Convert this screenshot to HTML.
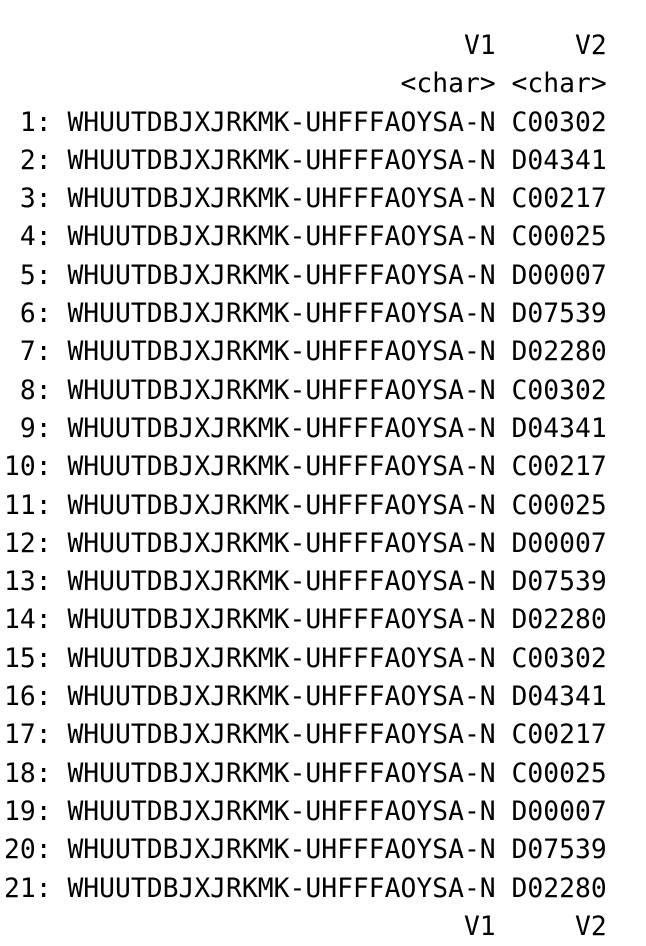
<!DOCTYPE html>
<html><head><style>
html,body{margin:0;padding:0;background:#fff;width:646px;height:942px;overflow:hidden}
pre{position:absolute;left:4px;top:27px;margin:0;font-family:"DejaVu Sans Mono","Liberation Mono",monospace;font-size:26.35px;line-height:38.3px;color:#000}
</style></head><body>
<pre>                             V1     V2
                         &lt;char&gt; &lt;char&gt;
 1: WHUUTDBJXJRKMK-UHFFFAOYSA-N C00302
 2: WHUUTDBJXJRKMK-UHFFFAOYSA-N D04341
 3: WHUUTDBJXJRKMK-UHFFFAOYSA-N C00217
 4: WHUUTDBJXJRKMK-UHFFFAOYSA-N C00025
 5: WHUUTDBJXJRKMK-UHFFFAOYSA-N D00007
 6: WHUUTDBJXJRKMK-UHFFFAOYSA-N D07539
 7: WHUUTDBJXJRKMK-UHFFFAOYSA-N D02280
 8: WHUUTDBJXJRKMK-UHFFFAOYSA-N C00302
 9: WHUUTDBJXJRKMK-UHFFFAOYSA-N D04341
10: WHUUTDBJXJRKMK-UHFFFAOYSA-N C00217
11: WHUUTDBJXJRKMK-UHFFFAOYSA-N C00025
12: WHUUTDBJXJRKMK-UHFFFAOYSA-N D00007
13: WHUUTDBJXJRKMK-UHFFFAOYSA-N D07539
14: WHUUTDBJXJRKMK-UHFFFAOYSA-N D02280
15: WHUUTDBJXJRKMK-UHFFFAOYSA-N C00302
16: WHUUTDBJXJRKMK-UHFFFAOYSA-N D04341
17: WHUUTDBJXJRKMK-UHFFFAOYSA-N C00217
18: WHUUTDBJXJRKMK-UHFFFAOYSA-N C00025
19: WHUUTDBJXJRKMK-UHFFFAOYSA-N D00007
20: WHUUTDBJXJRKMK-UHFFFAOYSA-N D07539
21: WHUUTDBJXJRKMK-UHFFFAOYSA-N D02280
                             V1     V2</pre>
</body></html>
